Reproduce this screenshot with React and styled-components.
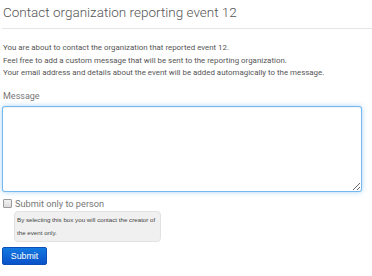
import React, { useState } from 'react';
import styled, { createGlobalStyle } from 'styled-components';

const GlobalStyle = createGlobalStyle`
  html, body {
    margin: 0;
    padding: 0;
    background: #fff;
  }
  body {
    font-family: Roboto, "Liberation Sans", sans-serif;
    color: #555;
  }
`;

const Page = styled.div`
  width: 372px;
  padding: 0 2px;
  box-sizing: border-box;
`;

const Title = styled.h1`
  margin: 0 -2px 0 0;
  padding: 2px 1px 6px;
  font-size: 13.5px;
  line-height: 20px;
  font-weight: 300;
  color: #555;
  border-bottom: 1px solid #e6e6e6;
`;

const Intro = styled.div`
  margin-top: 13px;
  padding-left: 1px;
  font-size: 7.9px;
  line-height: 12.5px;
  color: #555;
`;

const Label = styled.label`
  display: block;
  margin-top: 9px;
  padding-left: 1px;
  font-size: 9px;
  line-height: 14px;
  color: #777;
`;

const MessageBox = styled.textarea`
  display: block;
  box-sizing: border-box;
  width: 360px;
  height: 86px;
  margin-top: 3px;
  padding: 4px 6px;
  border: 1px solid rgba(82, 168, 236, 0.8);
  border-radius: 3px;
  box-shadow: inset 0 1px 1px rgba(0, 0, 0, 0.05), 0 0 5px rgba(82, 168, 236, 0.5);
  font-family: inherit;
  font-size: 9px;
  color: #555;
  outline: none;
`;

const CheckRow = styled.label`
  display: flex;
  align-items: center;
  gap: 3px;
  margin-top: 5px;
  padding-left: 1px;
  font-size: 9.2px;
  line-height: 14px;
  color: #777;
`;

const Box = styled.input`
  appearance: none;
  margin: 0;
  width: 9px;
  height: 9px;
  border: 1px solid #9a9a9a;
  border-radius: 1px;
  background: linear-gradient(#f2f2f2, #dcdcdc);
  box-sizing: border-box;

  &:checked {
    background: #3b82f6;
    border-color: #2563eb;
  }
`;

const Help = styled.div`
  width: 147px;
  box-sizing: border-box;
  margin: 0 0 0 12px;
  padding: 1px 2px;
  background: #f0f0f0;
  border: 1px solid #e2e2e2;
  border-radius: 4px;
  font-family: "Liberation Sans", Arial, sans-serif;
  font-size: 6.2px;
  line-height: 13.5px;
  color: #444;
  white-space: nowrap;
`;

const SubmitButton = styled.button`
  display: block;
  margin-top: 5px;
  width: 45px;
  height: 18px;
  padding: 0;
  border: 1px solid #0a4fb8;
  border-radius: 2px;
  background: linear-gradient(#1479e0, #0a52c9);
  color: #fff;
  font-family: "Liberation Sans", Arial, sans-serif;
  font-size: 8.8px;
  cursor: pointer;
`;

export default function App() {
  const [message, setMessage] = useState('');
  const [onlyPerson, setOnlyPerson] = useState(false);

  return (
    <Page>
      <GlobalStyle />
      <Title>Contact organization reporting event 12</Title>
      <Intro>
        You are about to contact the organization that reported event 12.
        <br />
        Feel free to add a custom message that will be sent to the reporting organization.
        <br />
        Your email address and details about the event will be added automagically to the message.
      </Intro>
      <Label htmlFor="msg">Message</Label>
      <MessageBox id="msg" value={message} onChange={e => setMessage(e.target.value)} />
      <CheckRow>
        <Box type="checkbox" checked={onlyPerson} onChange={e => setOnlyPerson(e.target.checked)} />
        Submit only to person
      </CheckRow>
      <Help>
        By selecting this box you will contact the creator of
        <br />
        the event only.
      </Help>
      <SubmitButton type="submit">Submit</SubmitButton>
    </Page>
  );
}
